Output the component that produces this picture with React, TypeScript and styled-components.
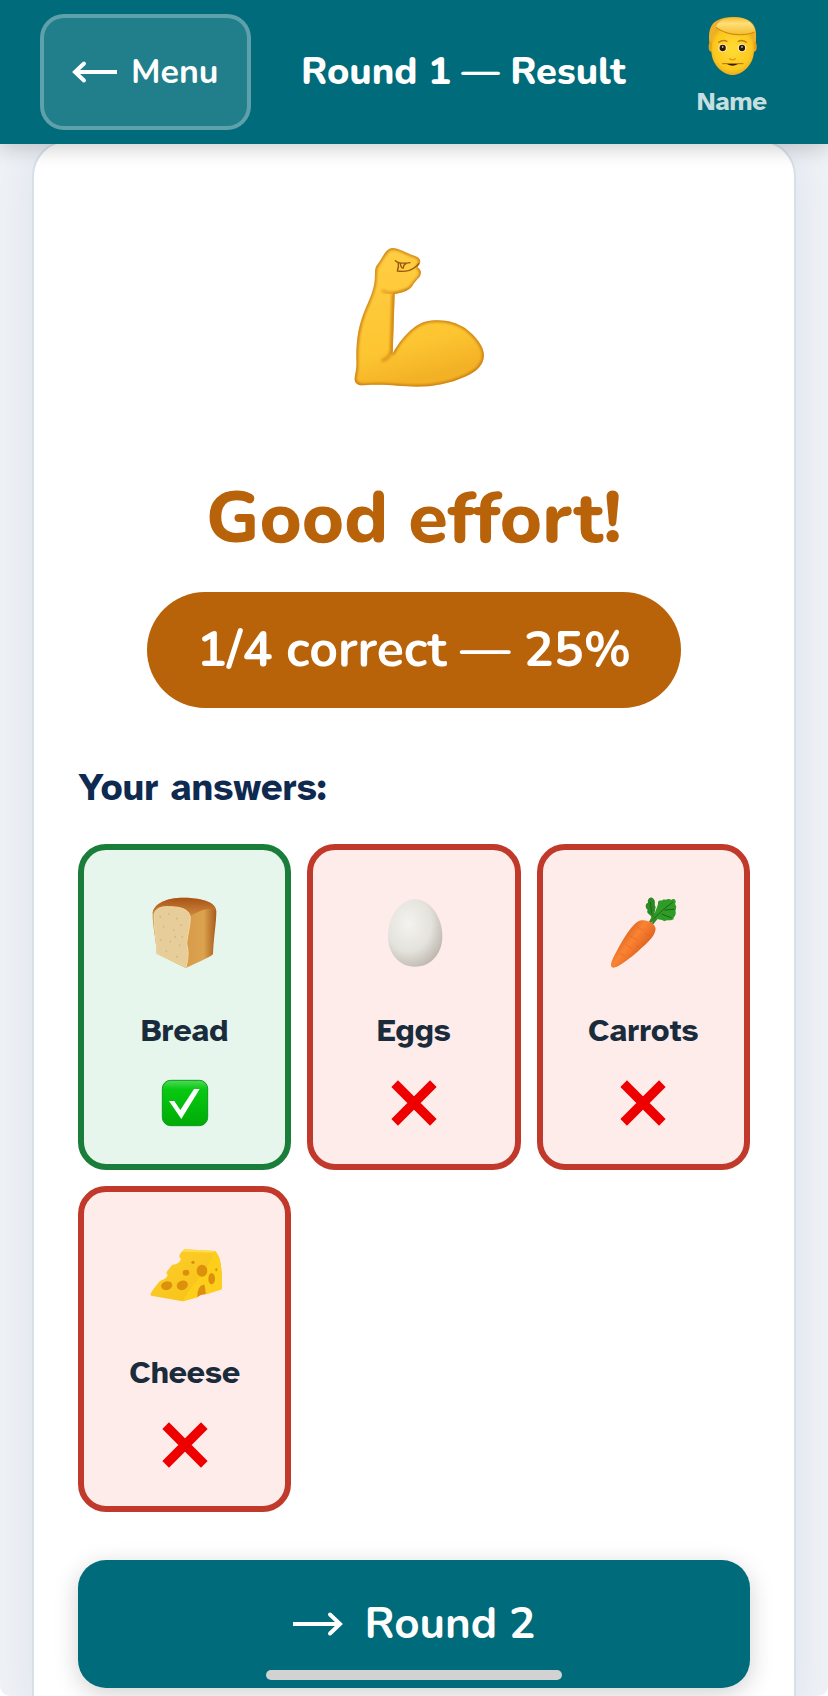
import { FC } from "react";
import styled, { createGlobalStyle } from "styled-components";

const GlobalStyle = createGlobalStyle`
  * {
    box-sizing: border-box;
  }

  body {
    margin: 0;
    background: #fff;
    color: #1a2b3c;
    font-family: "Atkinson Hyperlegible", Inter, "Liberation Sans", sans-serif;
  }
`;

const displayFont = `Nunito, Lato, "Open Sans", sans-serif`;

const Page = styled.div`
  display: flex;
  flex-direction: column;
  min-height: 100vh;
  background: #eef2f7;
  border-radius: 0 0 10px 10px;
  overflow: hidden;
`;

const Header = styled.header`
  position: sticky;
  top: 0;
  z-index: 1;
  display: flex;
  align-items: center;
  min-height: 144px;
  padding: 14px 40px;
  background: #006b7a;
  color: #fff;
  box-shadow: 0 4px 20px rgba(0, 0, 0, 0.2);
`;

const MenuButton = styled.button`
  display: flex;
  align-items: center;
  gap: 13px;
  height: 116px;
  padding: 0 28px;
  border: 4px solid rgba(255, 255, 255, 0.28);
  border-radius: 24px;
  background: rgba(255, 255, 255, 0.13);
  color: #fff;
  font: 700 34px/40px ${displayFont};
`;

const Title = styled.h1`
  flex: 1;
  margin: 0;
  text-align: center;
  font: 800 38px/48px ${displayFont};
`;

const Profile = styled.div`
  display: flex;
  flex-direction: column;
  align-items: center;
  align-self: flex-start;
  gap: 12px;
  width: 112px;
`;

const ProfileName = styled.span`
  color: rgba(255, 255, 255, 0.8);
  font-weight: 700;
  font-size: 26px;
  line-height: 28px;
`;

const Main = styled.main`
  flex: 1;
  display: flex;
  padding: 0 32px;
`;

const ResultCard = styled.section`
  flex: 1;
  display: flex;
  flex-direction: column;
  margin-top: -4px;
  padding: 103px 44px 8px;
  border: 2px solid #d5e0e8;
  border-bottom: 0;
  border-radius: 36px 36px 0 0;
  background: #fff;
  box-shadow: 0 8px 40px rgba(0, 40, 80, 0.08);
`;

const Summary = styled.div`
  display: flex;
  flex-direction: column;
  align-items: center;
`;

const Verdict = styled.h2`
  margin: 86px 0 32px;
  color: #b8620a;
  font: 800 72px/84px ${displayFont};
`;

const Score = styled.p`
  margin: 0;
  padding: 26px 50px;
  border-radius: 58px;
  background: #b8620a;
  color: #fff;
  font: 700 50px/64px ${displayFont};
`;

const AnswersTitle = styled.h3`
  margin: 56px 0 32px;
  color: #0f2a50;
  font-size: 38px;
  line-height: 48px;
`;

const AnswerList = styled.ul`
  display: grid;
  grid-template-columns: repeat(3, 1fr);
  gap: 16px;
  margin: 0;
  padding: 0;
  list-style: none;
`;

const AnswerTile = styled.li<{ $correct: boolean }>`
  display: flex;
  flex-direction: column;
  align-items: center;
  padding: 46px 8px 37px;
  border: 6px solid ${(p) => (p.$correct ? "#1b7d3a" : "#c1392b")};
  border-radius: 28px;
  background: ${(p) => (p.$correct ? "#e7f6ec" : "#feecea")};
`;

const AnswerName = styled.span`
  margin: 43px 0 30px;
  font-weight: 700;
  font-size: 32px;
  line-height: 36px;
`;

const NextButton = styled.button`
  display: flex;
  align-items: center;
  justify-content: center;
  gap: 22px;
  height: 128px;
  margin-top: 48px;
  border: 0;
  border-radius: 28px;
  background: #006b7a;
  color: #fff;
  font: 700 44px/52px ${displayFont};
  box-shadow: 0 6px 24px rgba(0, 0, 0, 0.18);
`;

const HomeIndicator = styled.div`
  position: fixed;
  z-index: 2;
  bottom: 16px;
  left: 50%;
  width: 296px;
  height: 10px;
  margin-left: -148px;
  border-radius: 5px;
  background: #d2d2d2;
`;

const ArrowLeft: FC = () => (
  <svg width="46" height="24" viewBox="0 0 46 24" fill="none" stroke="#fff" strokeWidth="4" aria-hidden>
    <path d="M45 12H3" />
    <path d="M12 3.5L3 12l9 8.500" strokeLinecap="round" />
  </svg>
);

const ArrowRight: FC = () => (
  <svg width="50" height="26" viewBox="0 0 50 26" fill="none" stroke="#fff" strokeWidth="4" aria-hidden>
    <path d="M0 13H46" />
    <path d="M37 3.500L47 13l-10 9.500" strokeLinecap="round" />
  </svg>
);

const Face: FC = () => (
  <svg width="52" height="62" viewBox="49 27 156 186" role="img" aria-label="Avatar">
    <defs>
      <radialGradient id="faceSkin" cx="0.5" cy="0.45" r="0.62">
        <stop offset="0" stopColor="#ffdc35" />
        <stop offset="0.7" stopColor="#fcc820" />
        <stop offset="1" stopColor="#df9c14" />
      </radialGradient>
      <linearGradient id="faceHair" x1="0" y1="0" x2="0" y2="1">
        <stop offset="0" stopColor="#f3b928" />
        <stop offset="0.35" stopColor="#ffdf78" />
        <stop offset="1" stopColor="#f5bd30" />
      </linearGradient>
    </defs>
    <path d="M60 118C54 80 62 56 84 46C110 33 150 33 176 46C199 58 202 82 198 118Z" fill="#eeb02a" />
    <ellipse cx="65" cy="125" rx="8" ry="15" fill="#e6a317" />
    <ellipse cx="193" cy="125" rx="8" ry="15" fill="#e6a317" />
    <path d="M68 108C72 90 76 78 82 68C110 90 150 94 182 82C188 88 190 96 191 108L193 138C192 180 158 210 129 210C100 210 66 180 65 138Z" fill="url(#faceSkin)" />
    <path d="M79 66C84 48 110 37 134 37C168 37 190 50 197 80C188 86 170 89 145 88C116 86 94 78 79 66Z" fill="url(#faceHair)" />
    <path d="M79 67C96 80 122 89 145 89C165 90 184 86 194 81" fill="none" stroke="#c9820d" strokeWidth="3" />
    <path d="M87 112Q99 103 112 109M146 109Q158 103 170 112" fill="none" stroke="#b87d18" strokeWidth="4" strokeLinecap="round" />
    <ellipse cx="99" cy="129" rx="13" ry="12" fill="#fff3c4" />
    <ellipse cx="157" cy="129" rx="13" ry="12" fill="#fff3c4" />
    <circle cx="99" cy="129" r="9.500" fill="#2e1804" />
    <circle cx="157" cy="129" r="9.500" fill="#2e1804" />
    <circle cx="99" cy="126" r="2.500" fill="#fff" />
    <circle cx="157" cy="126" r="2.500" fill="#fff" />
    <path d="M120 161Q128 168 137 161" fill="none" stroke="#dc9a16" strokeWidth="4" strokeLinecap="round" />
    <path d="M99 176H160" fill="none" stroke="#a96c10" strokeWidth="3" strokeLinecap="round" />
    <path d="M112 177Q128 188 145 177Z" fill="#3a1d03" />
  </svg>
);

const armShape =
  "M187 54C207 54 225 68 255 78C268 82 273 91 270 99C268 107 261 109 264 113C275 120 275 131 268 142C258 152 252 160 248 166C242 178 226 186 194 193L188 372C206 335 246 286 285 275C330 265 370 272 405 294C438 320 462 348 462 377C460 405 442 424 405 440C360 460 310 470 260 470C210 470 170 461 100 466C80 467 72 456 74 443C76 430 81 415 79 385C79 340 82 300 100 252C115 215 127 195 133 160C137 138 132 122 139 108C155 90 165 56 187 54Z";

const FlexedArm: FC = () => (
  <svg width="140" height="145" viewBox="42 45 420 435" overflow="visible" role="img" aria-label="Flexed biceps">
    <defs>
      <linearGradient id="arm" x1="0" y1="0" x2="0.25" y2="1">
        <stop offset="0" stopColor="#ffcf45" />
        <stop offset="0.75" stopColor="#fdc531" />
        <stop offset="1" stopColor="#f3b226" />
      </linearGradient>
      <filter id="armSoft" x="-10%" y="-10%" width="120%" height="120%">
        <feGaussianBlur stdDeviation="5" />
      </filter>
      <clipPath id="armClip">
        <path d={armShape} />
      </clipPath>
    </defs>
    <path d={armShape} fill="url(#arm)" />
    <g clipPath="url(#armClip)">
      <path d={armShape} fill="none" stroke="#bd6d0c" strokeWidth="8" filter="url(#armSoft)" />
      <path d="M190 190L185 360Q180 385 155 393" fill="none" stroke="#d68b13" strokeWidth="8" filter="url(#armSoft)" />
      <path d="M155 182Q190 200 240 178" fill="none" stroke="#d68b13" strokeWidth="6" filter="url(#armSoft)" />
    </g>
    <path d="M196 92Q208 103 240 98M266 101Q255 116 236 122Q218 126 202 123M204 97Q208 110 202 122M211 102Q214 116 220 114Q220 104 228 101" fill="none" stroke="#9a580f" strokeWidth="4" strokeLinecap="round" strokeLinejoin="round" />
  </svg>
);

const Bread: FC = () => (
  <svg width="80" height="74" viewBox="254 438 240 222" aria-hidden>
    <defs>
      <linearGradient id="crust" x1="0" y1="0" x2="1" y2="0">
        <stop offset="0" stopColor="#c8873f" />
        <stop offset="0.5" stopColor="#d89a48" />
        <stop offset="0.8" stopColor="#dba34f" />
        <stop offset="1" stopColor="#a85a1b" />
      </linearGradient>
      <linearGradient id="breadTop" x1="0" y1="0" x2="0" y2="1">
        <stop offset="0" stopColor="#a85316" />
        <stop offset="1" stopColor="#d08a3e" />
      </linearGradient>
    </defs>
    <path d="M277 490C280 460 320 443 370 443C430 444 467 458 468 484C468 520 460 560 458 612Q456 618 376 654L289 611C288 570 276 530 277 490Z" fill="url(#crust)" />
    <path d="M277 490C280 460 320 443 370 443C430 444 467 458 467 482C455 470 420 478 389 500C370 466 300 465 277 490Z" fill="url(#breadTop)" />
    <path d="M281 494C284 476 300 469 325 470C362 470 388 478 390 502C390 530 380 560 379 582C385 600 385 625 377 652L290 610C290 570 279 530 281 494Z" fill="#e6cd9a" stroke="#f3d99f" strokeWidth="3" />
    <path d="M300 500v1M325 492v1M350 505v1M310 530v1M340 540v1M362 525v1M302 570v1M330 575v1M358 585v1M318 603v1M350 620v1M345 560v1M366 560v1" stroke="#d3b67c" strokeWidth="5" strokeLinecap="round" />
  </svg>
);

const Egg: FC = () => (
  <svg width="80" height="74" viewBox="222 198 240 222" aria-hidden>
    <defs>
      <radialGradient id="eggShell" cx="0.38" cy="0.36" r="0.7">
        <stop offset="0" stopColor="#f4f3ef" />
        <stop offset="0.6" stopColor="#e4e2dc" />
        <stop offset="1" stopColor="#bdb7ae" />
      </radialGradient>
    </defs>
    <path d="M345 208C390 208 427 262 427 318C427 372 392 410 345 410C298 410 264 372 264 318C264 262 300 208 345 208Z" fill="url(#eggShell)" />
  </svg>
);

const Carrot: FC = () => (
  <svg width="80" height="74" viewBox="220 198 240 222" aria-hidden>
    <defs>
      <linearGradient id="carrotRoot" x1="0.2" y1="0.3" x2="0.75" y2="0.75">
        <stop offset="0" stopColor="#d9601c" />
        <stop offset="0.4" stopColor="#fb8433" />
        <stop offset="1" stopColor="#d8591a" />
      </linearGradient>
    </defs>
    <path d="M360 280L376 250L372 275L400 240" fill="none" stroke="#35872a" strokeWidth="8" />
    <path d="M366 262C362 252 348 250 354 240C346 232 346 222 355 218C352 206 364 198 371 206C380 214 372 224 378 230C376 240 376 252 366 262Z" fill="#2b8a22" />
    <path d="M374 262C374 240 386 232 385 216C390 206 397 216 402 208C412 212 416 202 424 210C434 202 442 212 436 222C444 232 436 238 438 246C440 258 430 260 432 268C420 274 412 268 404 274C394 266 384 272 374 262Z" fill="#319b28" />
    <path d="M374 264L404 236L430 216M404 240L434 238M396 252L426 264M366 250L362 216" fill="none" stroke="#16681a" strokeWidth="3" />
    <path d="M324 275C344 264 376 278 378 297C376 322 345 345 315 373C290 393 264 414 250 413C240 412 244 398 250 385C268 348 300 290 324 275Z" fill="url(#carrotRoot)" />
    <path d="M324 292L340 300M346 310L361 318M302 318L322 330M290 345L304 353M320 347L330 353M272 370L284 377" stroke="#e0651f" strokeWidth="2" strokeLinecap="round" />
  </svg>
);

const Cheese: FC = () => (
  <svg width="80" height="74" viewBox="254 204 240 222" aria-hidden>
    <defs>
      <linearGradient id="cheeseSide" x1="0" y1="0" x2="1" y2="1">
        <stop offset="0" stopColor="#fbcf2e" />
        <stop offset="1" stopColor="#f8c014" />
      </linearGradient>
    </defs>
    <path d="M372 238L464 243C480 258 486 290 484 358L437 373L433 345C422 342 410 355 411 382L367 394L272 377C268 372 275 362 296 336C306 328 318 328 322 316C314 308 320 304 336 284C350 284 362 274 362 266C352 260 358 250 372 238Z" fill="url(#cheeseSide)" />
    <path d="M464 243C480 258 486 290 484 358L437 373L433 345C422 342 410 355 411 382L367 394C380 360 440 310 464 243Z" fill="#fdcf1b" />
    <path d="M372 238L464 243L459 248L368 245Z" fill="#ffdc45" />
    <g fill="#dc900c">
      <ellipse cx="319" cy="347" rx="17" ry="13" transform="rotate(-12 319 347)" />
      <ellipse cx="366" cy="346" rx="17" ry="14" transform="rotate(-20 366 346)" />
      <ellipse cx="377" cy="308" rx="10" ry="9" />
      <ellipse cx="398" cy="277" rx="5" ry="5" />
      <ellipse cx="425" cy="302" rx="16" ry="18" />
      <ellipse cx="454" cy="326" rx="10" ry="17" />
      <ellipse cx="468" cy="299" rx="3" ry="5" />
      <path d="M433 345C422 342 410 355 411 382Q422 372 437 373Z" />
    </g>
  </svg>
);

const CorrectMark: FC = () => (
  <svg width="48" height="48" viewBox="0 0 144 144" role="img" aria-label="Correct">
    <defs>
      <linearGradient id="tick" x1="0" y1="0" x2="0" y2="1">
        <stop offset="0" stopColor="#4fd957" />
        <stop offset="0.2" stopColor="#08c912" />
        <stop offset="1" stopColor="#00ab06" />
      </linearGradient>
    </defs>
    <rect x="4" y="4" width="136" height="136" rx="25" fill="url(#tick)" stroke="#0c9a20" strokeWidth="3" />
    <path d="M24 66H40L58 93L99 30H116L61 120Z" fill="#fff" />
  </svg>
);

const WrongMark: FC = () => (
  <svg width="48" height="48" viewBox="0 0 144 144" role="img" aria-label="Incorrect">
    <path d="M14 14L130 130M130 14L14 130" stroke="#ee0000" strokeWidth="28" />
  </svg>
);

interface Answer {
  name: string;
  icon: FC;
  correct: boolean;
}

const answers: Answer[] = [
  { name: "Bread", icon: Bread, correct: true },
  { name: "Eggs", icon: Egg, correct: false },
  { name: "Carrots", icon: Carrot, correct: false },
  { name: "Cheese", icon: Cheese, correct: false },
];

const App: FC = () => (
  <>
    <GlobalStyle />
    <Page>
      <Header>
        <MenuButton type="button">
          <ArrowLeft />
          Menu
        </MenuButton>
        <Title>Round 1 — Result</Title>
        <Profile>
          <Face />
          <ProfileName>Name</ProfileName>
        </Profile>
      </Header>
      <Main>
        <ResultCard>
          <Summary>
            <FlexedArm />
            <Verdict>Good effort!</Verdict>
            <Score>1/4 correct — 25%</Score>
          </Summary>
          <AnswersTitle>Your answers:</AnswersTitle>
          <AnswerList>
            {answers.map(({ name, icon: Icon, correct }) => (
              <AnswerTile key={name} $correct={correct}>
                <Icon />
                <AnswerName>{name}</AnswerName>
                {correct ? <CorrectMark /> : <WrongMark />}
              </AnswerTile>
            ))}
          </AnswerList>
          <NextButton type="button">
            <ArrowRight />
            Round 2
          </NextButton>
        </ResultCard>
      </Main>
    </Page>
    <HomeIndicator />
  </>
);

export default App;
